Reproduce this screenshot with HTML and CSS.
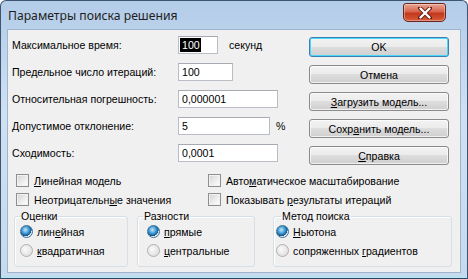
FILE: index.html
```html
<!DOCTYPE html>
<html lang="ru">
<head>
    <meta charset="UTF-8">
    <title>Параметры поиска решения</title>
    <link rel="stylesheet" href="styles.css">
</head>
<body>
    <div class="window">
        <div class="titlebar">
            <span class="title">Параметры поиска решения</span>
            <div class="close-btn">
                <svg width="14" height="12" viewBox="0 0 14 12">
                    <path d="M2 1 L12 11 M12 1 L2 11" stroke="#5a1a10" stroke-width="4" stroke-linecap="round"/>
                    <path d="M2.5 1.5 L11.5 10.5 M11.5 1.5 L2.5 10.5" stroke="#ffffff" stroke-width="2.4" stroke-linecap="round"/>
                </svg>
            </div>
        </div>

        <div class="client">
            <div class="top">
                <div class="form">
                    <div class="row">
                        <span class="label">Максимальное время:</span>
                        <span class="field w-time"><span class="selected">100</span></span>
                        <span class="unit unit-sec">секунд</span>
                    </div>
                    <div class="row">
                        <span class="label">Предельное число итераций:</span>
                        <span class="field w-iter">100</span>
                    </div>
                    <div class="row">
                        <span class="label">Относительная погрешность:</span>
                        <span class="field w-wide">0,000001</span>
                    </div>
                    <div class="row">
                        <span class="label">Допустимое отклонение:</span>
                        <span class="field w-dev">5</span>
                        <span class="unit unit-pct">%</span>
                    </div>
                    <div class="row">
                        <span class="label">Сходимость:</span>
                        <span class="field w-wide">0,0001</span>
                    </div>
                </div>

                <div class="buttons">
                    <button class="btn btn-default">OK</button>
                    <button class="btn">Отмена</button>
                    <button class="btn"><u>З</u>агрузить модель...</button>
                    <button class="btn">Сохр<u>а</u>нить модель...</button>
                    <button class="btn"><u>С</u>правка</button>
                </div>
            </div>

            <div class="checks">
                <div class="check"><span class="box"></span><span><u>Л</u>инейная модель</span></div>
                <div class="check"><span class="box"></span><span>Авто<u>м</u>атическое масштабирование</span></div>
                <div class="check"><span class="box"></span><span>Неотрицательн<u>ы</u>е значения</span></div>
                <div class="check"><span class="box"></span><span>Показывать <u>р</u>езультаты итераций</span></div>
            </div>

            <div class="groups">
                <fieldset class="group group-est">
                    <legend>Оценки</legend>
                    <div class="radio"><span class="dot on"></span><span>лин<u>е</u>йная</span></div>
                    <div class="radio"><span class="dot"></span><span><u>к</u>вадратичная</span></div>
                </fieldset>
                <fieldset class="group group-diff">
                    <legend>Разности</legend>
                    <div class="radio"><span class="dot on"></span><span><u>п</u>рямые</span></div>
                    <div class="radio"><span class="dot"></span><span><u>ц</u>ентральные</span></div>
                </fieldset>
                <fieldset class="group group-method">
                    <legend>Метод поиска</legend>
                    <div class="radio"><span class="dot on"></span><span><u>Н</u>ьютона</span></div>
                    <div class="radio"><span class="dot"></span><span>сопряженных <u>г</u>радиентов</span></div>
                </fieldset>
            </div>
        </div>
    </div>
</body>
</html>
```

FILE: styles.css
```css
:root {
    --frame-edge: #3e5470;
    --client-bg: #f0f0f0;
    --text: #000;
    --field-border: #b9bec6;
    --btn-border: #8a8a8a;
    --group-border: #d5dfe5;
}

* {
    margin: 0;
    padding: 0;
    box-sizing: border-box;
}

body {
    font-family: 'Liberation Sans', Arial, sans-serif;
    font-size: 10.6px;
    color: var(--text);
    background: #fff;
}

.window {
    width: 468px;
    height: 279px;
    display: flex;
    flex-direction: column;
    background: linear-gradient(to bottom, #b3cce8, #cfe0f2 40%, #c6daee);
    border: 1px solid var(--frame-edge);
    border-radius: 6px 6px 0 0;
    border-bottom-color: #2f4560;
    padding: 0 7px 6px 7px;
    box-shadow: inset 0 -2px 0 #b6e2f2;
}

.titlebar {
    height: 29px;
    display: flex;
    align-items: flex-start;
    justify-content: space-between;
}

.title {
    font-family: 'Noto Sans', sans-serif;
    font-size: 12.2px;
    color: #1e1e1e;
    margin-top: 6px;
}

.close-btn {
    width: 43px;
    height: 19px;
    margin-top: 2px;
    margin-right: 14px;
    border: 1px solid #6b2419;
    border-radius: 3px 3px 5px 5px;
    background: linear-gradient(to bottom, #e9a593, #d6654b 45%, #c2371c 55%, #d75c3c);
    display: flex;
    align-items: center;
    justify-content: center;
    box-shadow: inset 0 0 0 1px rgba(255, 255, 255, 0.35);
}

.client {
    flex: 1;
    background: var(--client-bg);
    box-shadow: 0 0 0 1px #9fb5cf;
    padding: 1px 0 0 4px;
}

.top {
    display: flex;
    justify-content: space-between;
}

.row {
    height: 27px;
    display: flex;
    align-items: center;
}

.label {
    width: 166px;
}

.field {
    height: 18px;
    display: flex;
    align-items: center;
    padding-left: 3px;
    background: #fff;
    border: 1px solid var(--field-border);
    border-top-color: #a5aab3;
}

.w-time { width: 40px; padding-left: 1px; }
.w-iter { width: 55px; }
.w-wide { width: 100px; }
.w-dev { width: 92px; }

.selected {
    background: #000;
    color: #fff;
    padding: 1px 1px 1px 2px;
}

.unit-sec { margin-left: 11px; }
.unit-pct { margin-left: 6px; }

.buttons {
    width: 140px;
    margin-right: 11px;
    padding-top: 6px;
    display: flex;
    flex-direction: column;
    gap: 8px;
}

.btn {
    height: 19px;
    font-family: inherit;
    font-size: 10.6px;
    color: var(--text);
    border: 1px solid var(--btn-border);
    border-radius: 3px;
    background: linear-gradient(to bottom, #f3f3f3, #ebebeb 49%, #dddddd 50%, #cfcfcf);
    box-shadow: inset 0 0 0 1px rgba(255, 255, 255, 0.7);
}

.btn-default {
    height: 20px;
    border-color: #3c7fb1;
    box-shadow: inset 0 0 0 1px #48d8fb;
}

u {
    text-decoration: underline;
    text-underline-offset: 1px;
}

.checks {
    margin-top: 5px;
    padding-left: 4px;
    display: grid;
    grid-template-columns: 192px 1fr;
    grid-auto-rows: 19px;
}

.check,
.radio {
    display: flex;
    align-items: center;
    gap: 5px;
}

.box {
    width: 13px;
    height: 13px;
    border: 1px solid #8e8f8f;
    background: linear-gradient(135deg, #d3d3d3, #f4f4f4 70%, #fff);
    box-shadow: inset 0 0 0 1px #f2f2f2;
}

.groups {
    margin-top: 1px;
    padding-left: 2px;
    display: flex;
}

.group {
    height: 57px;
    border: 1px solid var(--group-border);
    border-radius: 3px;
    box-shadow: 1px 1px 0 #fff inset;
    padding-left: 5px;
}

.group legend {
    padding: 0 1px;
}

.group-est {
    width: 114px;
}

.group-diff {
    width: 118px;
    margin-left: 9px;
}

.group-diff .radio {
    margin-left: 4px;
}

.group-method {
    width: 179px;
    margin-left: 18px;
    padding-left: 7px;
}

.group-method .radio {
    margin-left: -5px;
}

.radio {
    height: 19px;
    gap: 4px;
}

.dot {
    width: 13px;
    height: 13px;
    border-radius: 50%;
    border: 1px solid #b0b0b0;
    background: radial-gradient(circle at 40% 40%, #fafafa, #d8d8d8);
}

.dot.on {
    border-color: #3d6f95;
    background: radial-gradient(circle at 40% 35%, #bfe9ff 0, #2a88c6 45%, #124f7e 62%, #e6eef4 65%, #f4f4f4);
}
```
